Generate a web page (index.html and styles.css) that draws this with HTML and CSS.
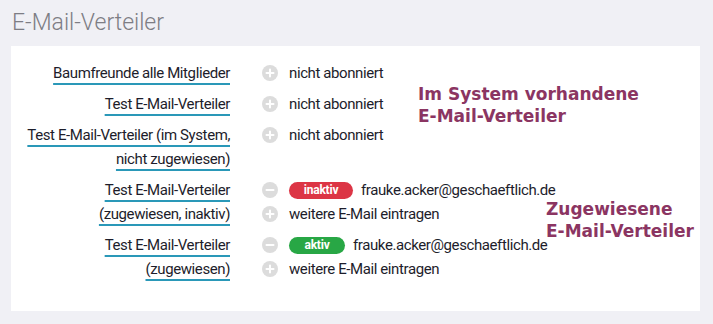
FILE: index.html
```html
<!DOCTYPE html>
<html lang="de">
<head>
    <meta charset="UTF-8">
    <meta name="viewport" content="width=device-width, initial-scale=1.0">
    <title>E-Mail-Verteiler</title>
    <link rel="stylesheet" href="styles.css">
</head>
<body>
    <h1 class="title">E-Mail-Verteiler</h1>
    <section class="panel">
        <div class="list">
            <div class="label"><a href="#">Baumfreunde alle Mitglieder</a></div>
            <div class="values">
                <div class="line">
                    <span class="icon"><svg viewBox="0 0 16 16"><circle cx="8" cy="8" r="8"/><path d="M8 4.5v7M4.5 8h7"/></svg></span>
                    <span>nicht abonniert</span>
                </div>
            </div>

            <div class="label"><a href="#">Test E-Mail-Verteiler</a></div>
            <div class="values">
                <div class="line">
                    <span class="icon"><svg viewBox="0 0 16 16"><circle cx="8" cy="8" r="8"/><path d="M8 4.5v7M4.5 8h7"/></svg></span>
                    <span>nicht abonniert</span>
                </div>
            </div>

            <div class="label"><a href="#">Test E-Mail-Verteiler (im System,<br>nicht zugewiesen)</a></div>
            <div class="values">
                <div class="line">
                    <span class="icon"><svg viewBox="0 0 16 16"><circle cx="8" cy="8" r="8"/><path d="M8 4.5v7M4.5 8h7"/></svg></span>
                    <span>nicht abonniert</span>
                </div>
            </div>

            <div class="label"><a href="#">Test E-Mail-Verteiler<br>(zugewiesen, inaktiv)</a></div>
            <div class="values">
                <div class="line">
                    <span class="icon"><svg viewBox="0 0 16 16"><circle cx="8" cy="8" r="8"/><path d="M4.5 8h7"/></svg></span>
                    <span class="badge badge-off">inaktiv</span>
                    <span>frauke.acker@geschaeftlich.de</span>
                </div>
                <div class="line">
                    <span class="icon"><svg viewBox="0 0 16 16"><circle cx="8" cy="8" r="8"/><path d="M8 4.5v7M4.5 8h7"/></svg></span>
                    <span>weitere E-Mail eintragen</span>
                </div>
            </div>

            <div class="label"><a href="#">Test E-Mail-Verteiler<br>(zugewiesen)</a></div>
            <div class="values">
                <div class="line">
                    <span class="icon"><svg viewBox="0 0 16 16"><circle cx="8" cy="8" r="8"/><path d="M4.5 8h7"/></svg></span>
                    <span class="badge badge-on">aktiv</span>
                    <span>frauke.acker@geschaeftlich.de</span>
                </div>
                <div class="line">
                    <span class="icon"><svg viewBox="0 0 16 16"><circle cx="8" cy="8" r="8"/><path d="M8 4.5v7M4.5 8h7"/></svg></span>
                    <span>weitere E-Mail eintragen</span>
                </div>
            </div>
        </div>

        <div class="note note-system">Im System vorhandene<br>E-Mail-Verteiler</div>
        <div class="note note-assigned">Zugewiesene<br>E-Mail-Verteiler</div>
    </section>
</body>
</html>
```

FILE: styles.css
```css
body {
    margin: 0;
    padding: 0 13px 13px 11px;
    background-color: #f0f0f5;
    font-family: Roboto, "Noto Sans", sans-serif;
    color: #1d1d2b;
}
.title {
    margin: 0;
    height: 46px;
    line-height: 46px;
    padding-left: 1px;
    font-size: 23px;
    font-weight: 300;
    color: #7d7d84;
}
.panel {
    position: relative;
    background-color: white;
    height: 265px;
    box-sizing: border-box;
    padding-top: 15px;
}
.list {
    display: grid;
    grid-template-columns: 219px auto;
    column-gap: 32px;
    row-gap: 7px;
    font-size: 15px;
    letter-spacing: -0.4px;
    line-height: 24px;
}
.label {
    text-align: right;
}
.label a {
    color: #1d1d2b;
    text-decoration: underline;
    text-decoration-color: #2a98b8;
    text-decoration-thickness: 1.5px;
    text-underline-offset: 5px;
}
.values {
    display: flex;
    flex-direction: column;
}
.line {
    display: flex;
    align-items: center;
    height: 24px;
    gap: 11px;
}
.icon {
    width: 16px;
    height: 16px;
    display: flex;
}
.icon svg {
    width: 16px;
    height: 16px;
}
.icon circle {
    fill: #dcdcdc;
}
.icon path {
    stroke: white;
    stroke-width: 2;
    stroke-linecap: round;
}
.badge {
    height: 17px;
    line-height: 17px;
    border-radius: 9px;
    color: white;
    font-size: 12px;
    letter-spacing: -0.2px;
    font-weight: bold;
    text-align: center;
    margin-right: -3px;
}
.badge-off {
    width: 64px;
    background-color: #dc3545;
}
.badge-on {
    width: 56px;
    background-color: #28a745;
}
.note {
    position: absolute;
    font-family: "DejaVu Sans", sans-serif;
    font-weight: bold;
    font-size: 17px;
    line-height: 22px;
    color: #8b3562;
}
.note-system {
    left: 407px;
    top: 37px;
}
.note-assigned {
    left: 535px;
    top: 152px;
}
```
